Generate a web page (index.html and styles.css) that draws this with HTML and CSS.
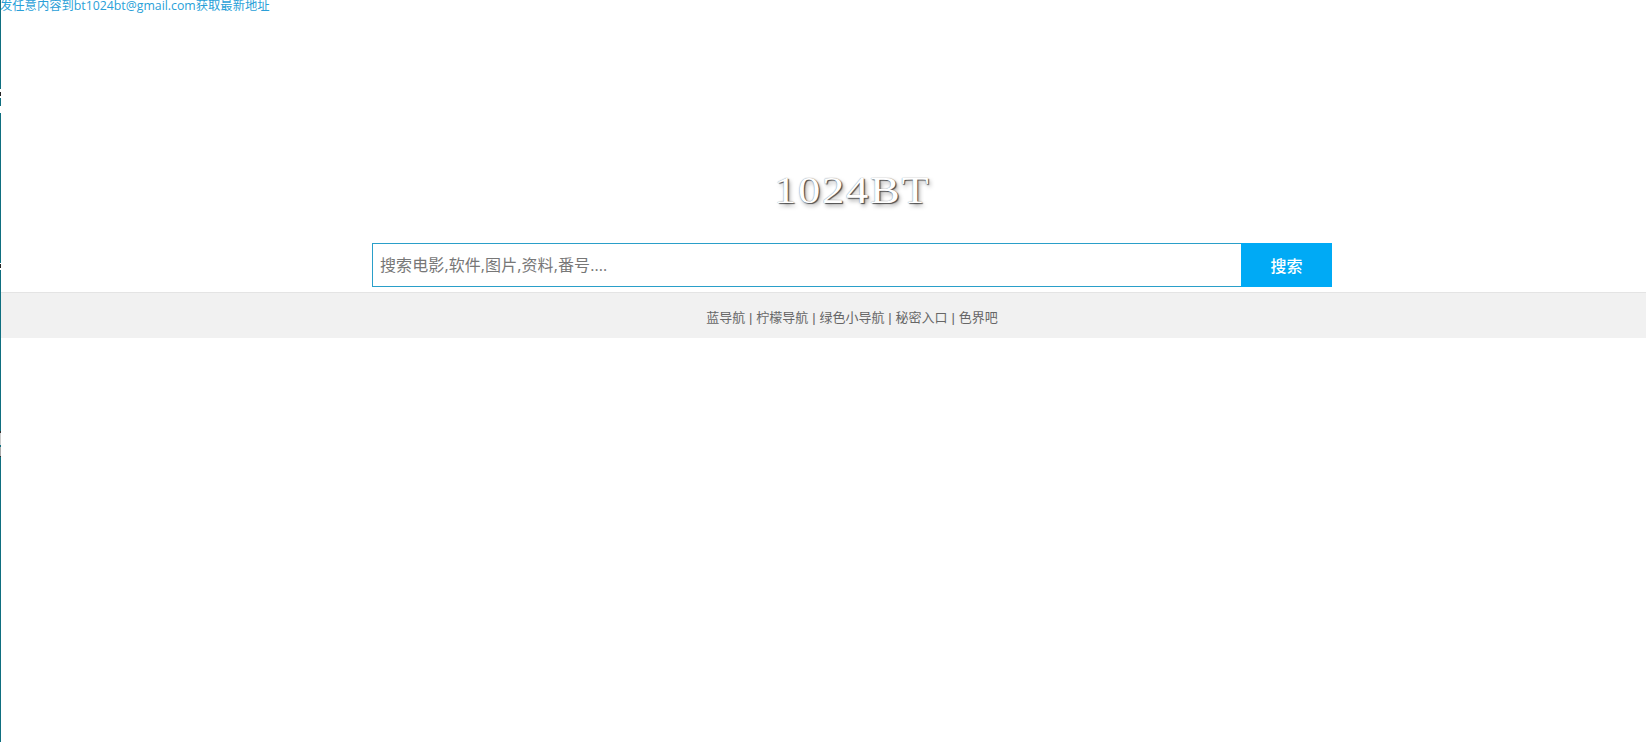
FILE: index.html
```html
<!DOCTYPE html>
<html lang="zh-CN">
<head>
    <meta charset="UTF-8">
    <meta name="viewport" content="width=device-width, initial-scale=1.0">
    <title>1024BT</title>
    <link rel="stylesheet" href="styles.css">
</head>
<body>
    <div class="edge"></div>
    <a class="notice" href="#">发任意内容到bt1024bt@gmail.com获取最新地址</a>

    <div class="wrap">
        <div class="logo"><span class="logo-text">1024BT</span></div>

        <form class="search">
            <input class="search-input" type="text" placeholder="搜索电影,软件,图片,资料,番号....">
            <button class="search-btn" type="button">搜索</button>
        </form>
    </div>

    <div class="footer">
        <div class="links">
            <a href="#">蓝导航</a> | <a href="#">柠檬导航</a> | <a href="#">绿色小导航</a> | <a href="#">秘密入口</a> | <a href="#">色界吧</a>
        </div>
    </div>
</body>
</html>
```

FILE: styles.css
```css
* {
    margin: 0;
    padding: 0;
    box-sizing: border-box;
}

body {
    font-family: "Open Sans", "Noto Sans CJK SC", sans-serif;
    background: #fff;
    min-height: 100vh;
    overflow: hidden;
}

a {
    text-decoration: none;
}

.edge {
    position: absolute;
    left: 0;
    top: 0;
    width: 1px;
    height: 742px;
    background: linear-gradient(to bottom,
        #0f6f80 0, #0f6f80 89px, #fff 89px, #fff 92px, #222 92px, #222 96px,
        #fff 96px, #fff 98px, #0f6f80 98px, #0f6f80 106px, #fff 106px, #fff 113px,
        #0f6f80 113px, #0f6f80 263px, #fff 263px, #fff 264px, #222 264px, #222 268px,
        #fff 268px, #fff 270px, #0f6f80 270px, #0f6f80 431px, #333 431px, #333 433px,
        #ccc 433px, #ccc 445px, #0f6f80 445px, #0f6f80 447px, #aaa 447px, #aaa 456px,
        #333 456px, #333 457px, #0f6f80 457px, #0f6f80 742px);
}

.notice {
    display: block;
    height: 14px;
    font-size: 12.3px;
    line-height: 12px;
    color: #2a9fd8;
    white-space: nowrap;
}

.wrap {
    width: 960px;
    margin-left: 372px;
}

.logo {
    display: flex;
    justify-content: center;
    margin-top: 150px;
    height: 55px;
}

.logo-text {
    font-family: "Liberation Serif", serif;
    font-size: 37px;
    letter-spacing: 1.5px;
    line-height: 54px;
    color: #fff;
    transform: scaleX(1.2);
    text-shadow: 0 0 1px #777, 1px 1px 1px #444, 2px 3px 4px #aaa;
}

.search {
    display: flex;
    height: 44px;
    margin-top: 24px;
}

.search-input {
    flex: 1;
    border: 1px solid #2a9fc9;
    border-right: 0;
    padding: 0 7px;
    font-family: inherit;
    font-size: 16px;
    letter-spacing: 0.1px;
    outline: none;
}

.search-input::placeholder {
    color: #777;
    opacity: 1;
}

.search-btn {
    width: 91px;
    border: 0;
    background: #00aaf5;
    color: #fff;
    font-family: inherit;
    font-size: 16px;
    font-weight: 500;
}

.footer {
    margin-top: 5px;
    height: 46px;
    margin-left: 1px;
    padding-left: 371px;
    background: #f1f1f1;
    border-top: 1px solid #e4e4e4;
}

.links {
    width: 960px;
    text-align: center;
    font-family: "Liberation Sans", "Noto Sans CJK SC", sans-serif;
    font-size: 13px;
    word-spacing: 0.25px;
    line-height: 49px;
    color: #666;
}

.links a {
    color: #666;
}
```
